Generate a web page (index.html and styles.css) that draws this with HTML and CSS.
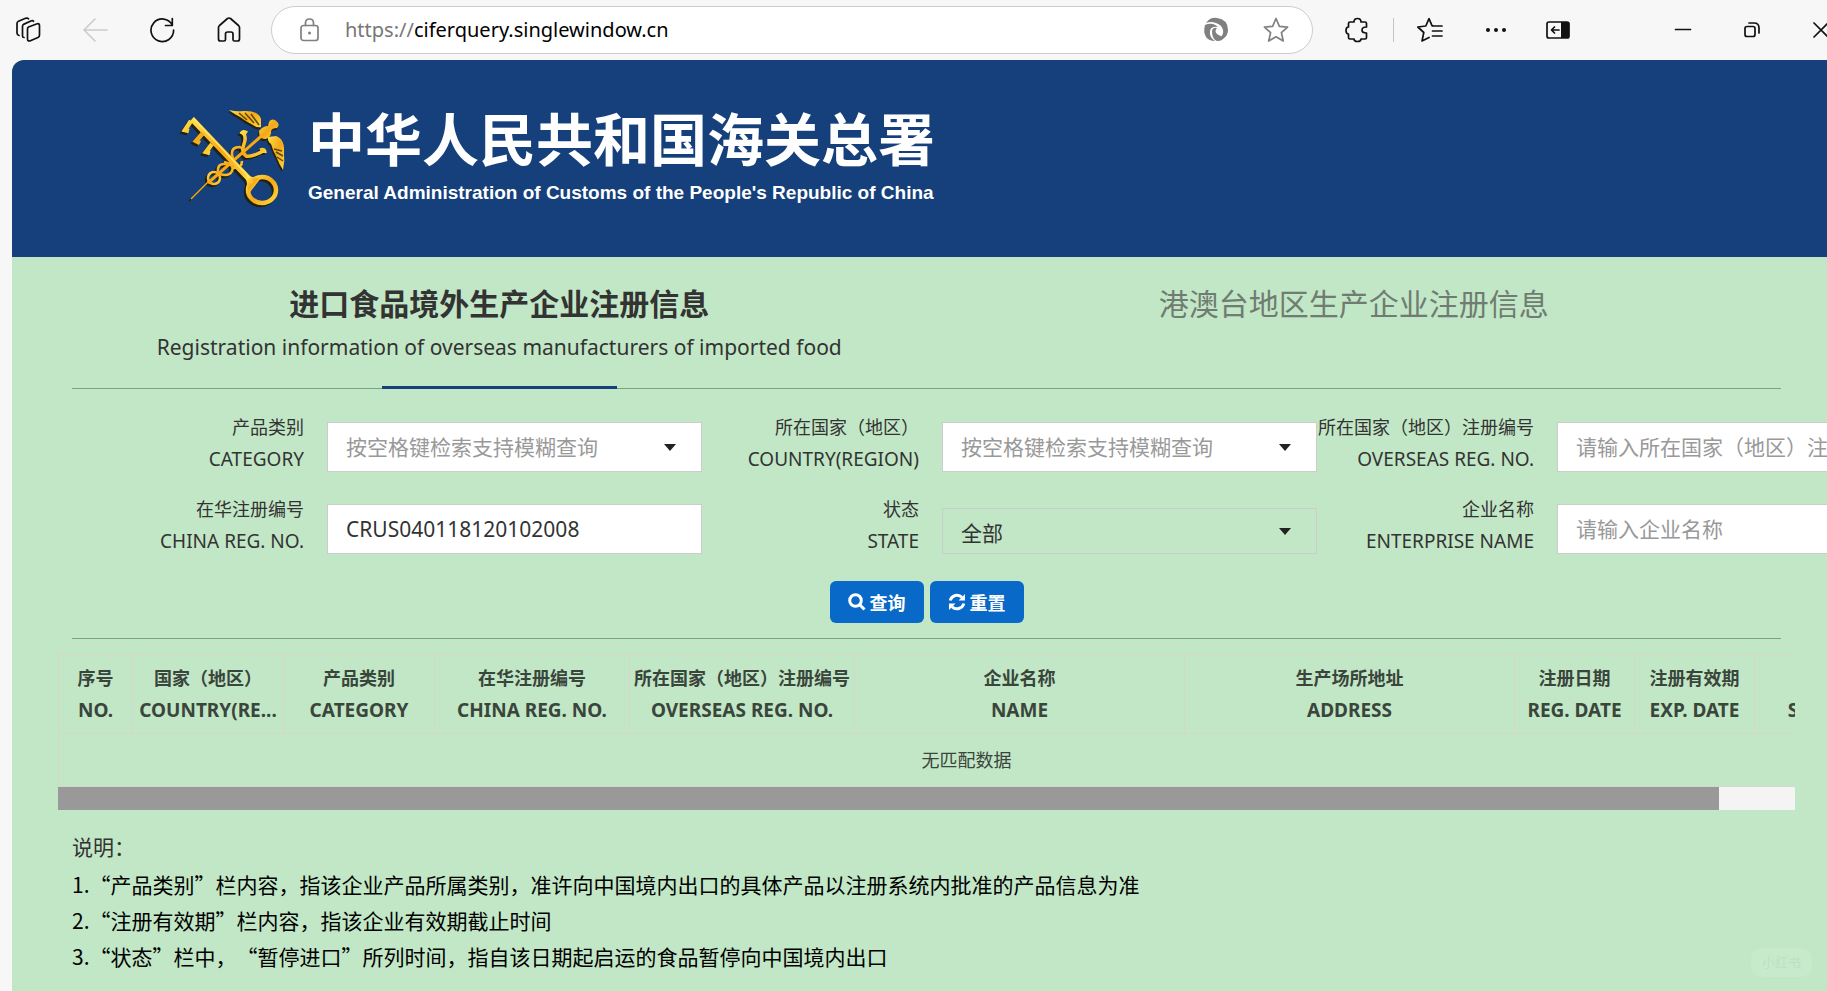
FILE: index.html
```html
<!DOCTYPE html>
<html lang="zh-CN">
<head>
    <meta charset="UTF-8">
    <title>进口食品境外生产企业注册信息</title>
    <link rel="stylesheet" href="styles.css">
</head>
<body>
    <div class="toolbar">
        <div class="nav">
            <button type="button" class="tool" aria-label="Tabs">
                <svg width="26" height="26" viewBox="0 0 26 26"><path d="M13.500 10l8-3q3-1 3 1.500v9.500q0 1.800-1.500 2.500l-7 3q-3.500 1.500-3.500-1.500V12q0-1.500 1-2z"/><path d="M9 20.500q-1.500 0-1.500-1.500V9.500q0-1.700 1.500-2.400l7.500-3.300q1.500-.6 2 .5"/><path d="M4 18.500Q2 18 2 16V6.500q0-1.700 1.500-2.300L10.500 1.300q2-.6 3 .5"/></svg>
            </button>
            <button type="button" class="tool off" aria-label="Back">
                <svg width="26" height="26" viewBox="0 0 26 26"><path d="M25 13H2M13 2L2 13l11 11"/></svg>
            </button>
            <button type="button" class="tool" aria-label="Refresh">
                <svg width="26" height="26" viewBox="0 0 26 26"><path d="M23.300 8A11.300 11.300 0 1 0 24.600 13M23.300 1.500V8.500H16.500"/></svg>
            </button>
            <button type="button" class="tool" aria-label="Home">
                <svg width="26" height="26" viewBox="0 0 26 26"><path d="M2.500 10.500Q2.500 9.500 3.500 8.500l8-7q1.500-1 3 0l8 7q1 1 1 2V22q0 2-2 2h-3q-1.500 0-1.500-1.500V17q0-2-2-2h-3.500q-2 0-2 2v5.500Q9.500 24 8 24H4.500q-2 0-2-2z"/></svg>
            </button>
        </div>
        <div class="address">
            <svg class="grey" width="26" height="26" viewBox="0 0 26 26"><rect x="5" y="8.500" width="17" height="15" rx="2.500"/><path d="M9.500 8.500V6q0-4 4-4t4 4v2.500"/><circle class="fill" cx="13.500" cy="16" r="1.500"/></svg>
            <span class="url"><span class="scheme">https://</span>ciferquery.singlewindow.cn</span>
            <button type="button" class="tool grey" aria-label="Translate page">
                <svg width="26" height="26" viewBox="0 0 26 26"><path class="fill" d="M3 6Q7 0 14 1q11 1.500 11 12 0 5-4 8-2 1-4 0 4-4 3-8-1-5-7-7-5-2-10 0z"/><path class="fill" d="M2 8q4-2 8-1 3 1 5 3-7-1-8 4-1 6 5 10-6 0-9-4Q0 15 2 8z"/><path class="fill" d="M9 14q1-4 5-3-3 3 0 6 4 3 8 2.500-3 5-8 4.500-5-2-5-10z"/></svg>
            </button>
            <button type="button" class="tool grey" aria-label="Favourite">
                <svg width="26" height="26" viewBox="0 0 26 26"><path d="M13 1.500l3.400 7.800 8.200.8-6.200 5.600 1.900 8.300L13 19.800 5.700 24l1.900-8.300L1.400 10.100l8.200-.8z"/></svg>
            </button>
        </div>
        <div class="extras">
            <button type="button" class="tool" aria-label="Extensions">
                <svg width="26" height="26" viewBox="0 0 26 26"><path d="M6 5h4q0-3.500 3.500-3.500T17 5h4q1.500 0 1.500 1.500V10q-4.500 0-4.500 3t4.500 3v4.500q0 1.500-1.500 1.500h-4q0 2.500-3.500 2.500T10 22H6q-1.500 0-1.500-1.500V17Q2 17 2 13.500T4.500 10V6.500Q4.500 5 6 5z"/></svg>
            </button>
            <span class="divider"></span>
            <button type="button" class="tool" aria-label="Favourites list">
                <svg width="26" height="26" viewBox="0 0 26 26"><path d="M17 9l-2-.3-3-7-3.200 7.300-8 1 6 5.500L5 24l7-3.500M15.500 9H25M15.500 14H25M15.500 19H25"/></svg>
            </button>
            <button type="button" class="tool dots" aria-label="More">
                <svg width="26" height="26" viewBox="0 0 26 26"><circle class="fill" cx="5" cy="13" r="2"/><circle class="fill" cx="13" cy="13" r="2"/><circle class="fill" cx="21" cy="13" r="2"/></svg>
            </button>
            <button type="button" class="tool" aria-label="Sidebar">
                <svg width="26" height="26" viewBox="0 0 26 26"><rect x="2" y="5" width="22" height="16" rx="2"/><path class="fill" d="M16 5h6q2 0 2 2v12q0 2-2 2h-6z"/><path d="M14 13H7M9.500 10L6.500 13l3 3"/></svg>
            </button>
        </div>
        <div class="window">
            <button type="button" class="tool" aria-label="Minimise">
                <svg width="26" height="26" viewBox="0 0 26 26"><path d="M5.500 12.500h15"/></svg>
            </button>
            <button type="button" class="tool" aria-label="Restore">
                <svg width="26" height="26" viewBox="0 0 26 26"><rect x="6" y="9.500" width="10" height="10" rx="2"/><path d="M10 6h5q5 0 5 5v5"/></svg>
            </button>
            <button type="button" class="tool" aria-label="Close">
                <svg width="26" height="26" viewBox="0 0 26 26"><path d="M6 6l14 14M20 6L6 20"/></svg>
            </button>
        </div>
    </div>

    <div class="page">
        <header class="banner">
            <svg class="emblem" width="130" height="120" viewBox="0 0 130 120">
                <defs>
                    <linearGradient id="gold" x1="0" y1="0" x2="1" y2="1">
                        <stop offset="0" stop-color="#ffe04a"/>
                        <stop offset=".5" stop-color="#f5a818"/>
                        <stop offset="1" stop-color="#ffd83c"/>
                    </linearGradient>
                    <g id="staff">
                        <path d="M19 100L36 83" stroke-width="1.500"/>
                        <path d="M36 84L94 33" stroke-width="3"/>
                        <circle cx="42" cy="79" r="6" stroke-width="2.500"/>
                        <path d="M46 73q-1-9 8-8 10 1 6-9-1-8 8-8 4 2 3 8M48 75q9 3 12-3t-8-9M61 69q9 0 9-7" stroke-width="2.500"/>
                        <path d="M70 33q5 4 2 12t2 12q4 1 11-2t7-4M69 35q2-4 6-1M88 51q5-2 5 3" stroke-width="3.500"/>
                    </g>
                    <g id="wings">
                        <path d="M57 11q8 2 14 1 15-1 18 8v8q-4 1-8-2-8-4-13-8-6-3-11-7z"/>
                        <path d="M111 71q2-9 1-17 1-14-8-17l-8 1q-1 4 3 7 2 7 5 12 3 8 7 14z"/>
                        <path d="M87 32q4-5 9-5 1-8 7-6 6 4 2 8-5 0-6 3 1 5-5 8-7 1-7-8z"/>
                    </g>
                    <g id="key">
                        <path d="M20 20L80 83" stroke-width="5.500"/>
                        <path d="M19 22l-6 9 4 1M31 34l-7 8 4 2M40 45l-6 8 4 1" stroke-width="4.500"/>
                        <ellipse cx="90" cy="91" rx="14" ry="13" stroke-width="4.500"/>
                        <path d="M76 79l9 2-7 9z" stroke-width="4"/>
                    </g>
                </defs>
                <g fill="none" stroke="#24210f" transform="translate(-2 2)"><use href="#staff"/><use href="#key"/></g>
                <use href="#wings" fill="#24210f" transform="translate(-1 2)"/>
                <g fill="none" stroke="url(#gold)"><use href="#staff"/></g>
                <use href="#wings" fill="url(#gold)"/>
                <path d="M67 14l8 7M73 14l9 10M79 15l8 11M110 52l-8-2M111 57l-7-4M111 62l-6-4" stroke="#5c4a10" stroke-width="1.500"/>
                <g fill="none" stroke="url(#gold)"><use href="#key"/></g>
                <path d="M21 19L78 79" stroke="#ffe56a" stroke-width="1.500"/>
            </svg>
            <div class="brand">
                <h1>中华人民共和国海关总署</h1>
                <p>General Administration of Customs of the People's Republic of China</p>
            </div>
        </header>

        <main>
            <nav class="tabs">
                <a href="#overseas" class="tab active">
                    <b>进口食品境外生产企业注册信息</b>
                    <span>Registration information of overseas manufacturers of imported food</span>
                </a>
                <a href="#region" class="tab">港澳台地区生产企业注册信息</a>
            </nav>

            <form class="search">
                <div class="fields">
                    <div class="field">
                        <label for="category">产品类别<span class="en">CATEGORY</span></label>
                        <div class="pick">
                            <select id="category" class="empty"><option>按空格键检索支持模糊查询</option></select>
                        </div>
                    </div>
                    <div class="field">
                        <label for="country">所在国家（地区）<span class="en">COUNTRY(REGION)</span></label>
                        <div class="pick">
                            <select id="country" class="empty"><option>按空格键检索支持模糊查询</option></select>
                        </div>
                    </div>
                    <div class="field">
                        <label for="overseas-no">所在国家（地区）注册编号<span class="en">OVERSEAS REG. NO.</span></label>
                        <input type="text" id="overseas-no" placeholder="请输入所在国家（地区）注册编号">
                    </div>
                    <div class="field">
                        <label for="china-no">在华注册编号<span class="en">CHINA REG. NO.</span></label>
                        <input type="text" id="china-no" value="CRUS040118120102008">
                    </div>
                    <div class="field">
                        <label for="state">状态<span class="en">STATE</span></label>
                        <div class="pick">
                            <select id="state" class="plain"><option>全部</option></select>
                        </div>
                    </div>
                    <div class="field">
                        <label for="enterprise">企业名称<span class="en">ENTERPRISE NAME</span></label>
                        <input type="text" id="enterprise" placeholder="请输入企业名称">
                    </div>
                </div>
                <div class="actions">
                    <button type="button" class="btn">
                        <svg width="18" height="18" viewBox="0 0 18 18"><circle cx="7.500" cy="7.500" r="5.800"/><path d="M12 12l4.500 4.500"/></svg>查询
                    </button>
                    <button type="reset" class="btn">
                        <svg width="18" height="18" viewBox="0 0 18 18"><path d="M2.200 7.500A7 7 0 0 1 14 4.300M15.800 10.500A7 7 0 0 1 4 13.700"/><path class="fill" d="M17 1v6.500h-6.500zM1 17v-6.500h6.500z"/></svg>重置
                    </button>
                </div>
            </form>

            <div class="results">
                <div class="clip">
                    <table>
                        <colgroup>
                            <col class="c-no"><col class="c-mid"><col class="c-mid"><col class="c-china"><col class="c-over">
                            <col class="c-wide"><col class="c-wide"><col class="c-date"><col class="c-date"><col class="c-date">
                        </colgroup>
                        <thead>
                            <tr>
                                <th>序号<span class="en">NO.</span></th>
                                <th>国家（地区）<span class="en">COUNTRY(RE...</span></th>
                                <th>产品类别<span class="en">CATEGORY</span></th>
                                <th>在华注册编号<span class="en">CHINA REG. NO.</span></th>
                                <th>所在国家（地区）注册编号<span class="en">OVERSEAS REG. NO.</span></th>
                                <th>企业名称<span class="en">NAME</span></th>
                                <th>生产场所地址<span class="en">ADDRESS</span></th>
                                <th>注册日期<span class="en">REG. DATE</span></th>
                                <th>注册有效期<span class="en">EXP. DATE</span></th>
                                <th>状态<span class="en">STATE</span></th>
                            </tr>
                        </thead>
                        <tbody>
                            <tr><td colspan="10">无匹配数据</td></tr>
                        </tbody>
                    </table>
                </div>
                <div class="track"><div class="thumb"></div></div>
            </div>

            <section class="notes">
                <p class="lead">说明：</p>
                <p>1.“产品类别”栏内容，指该企业产品所属类别，准许向中国境内出口的具体产品以注册系统内批准的产品信息为准</p>
                <p>2.“注册有效期”栏内容，指该企业有效期截止时间</p>
                <p>3.“状态”栏中，“暂停进口”所列时间，指自该日期起启运的食品暂停向中国境内出口</p>
            </section>
        </main>
    </div>
    <span class="mark">小红书</span>
</body>
</html>
```

FILE: styles.css
```css
* {
    box-sizing: border-box;
}
body {
    margin: 0;
    font-family: "Noto Sans", "Noto Sans CJK SC", sans-serif;
    font-size: 18px;
    line-height: 32px;
    color: #333;
    background-color: #f7f7f7;
    overflow: hidden;
}
h1, p {
    margin: 0;
}
a {
    color: inherit;
    text-decoration: none;
}
button, input, select {
    font-family: inherit;
    margin: 0;
}
svg {
    display: block;
    flex: none;
}
.en {
    display: block;
    font-size: 19px;
}

/* browser bar */
.toolbar {
    display: flex;
    align-items: center;
    height: 60px;
    padding-left: 15px;
    margin-right: -7px;
}
.tool {
    display: block;
    padding: 0;
    border: 0;
    background: none;
    color: #111;
}
.tool svg, .address svg {
    fill: none;
    stroke: currentColor;
    stroke-width: 1.7;
    stroke-linecap: round;
    stroke-linejoin: round;
}
.tool .fill, .address .fill {
    fill: currentColor;
    stroke: none;
}
.off {
    color: #ccc;
}
.grey {
    color: #808080;
}
.nav {
    display: flex;
    gap: 41px;
}
.address {
    display: flex;
    align-items: center;
    flex: 1;
    height: 48px;
    margin-left: 29px;
    padding: 0 23px 0 24px;
    border: 1px solid #ccc;
    border-radius: 24px;
    background-color: #fff;
}
.address .tool {
    margin-left: 34px;
}
.url {
    flex: 1;
    margin-left: 23px;
    font-size: 20px;
    color: #000;
}
.scheme {
    color: #777;
}
.extras {
    display: flex;
    align-items: center;
    gap: 23px;
    margin-left: 31px;
}
.divider {
    width: 1px;
    height: 24px;
    background-color: #c4c4c4;
}
.dots {
    margin: 0 13px 0 17px;
}
.window {
    display: flex;
    gap: 43px;
    margin-left: 99px;
}

/* header */
.page {
    min-height: 931px;
    margin-left: 12px;
    border-top-left-radius: 12px;
    background-color: #c2e7c6;
    overflow: hidden;
}
.banner {
    display: flex;
    align-items: center;
    height: 197px;
    padding-left: 160px;
    color: #fff;
    background-color: #15407b;
}
.brand {
    margin-left: 6px;
    padding-top: 3px;
    white-space: nowrap;
}
.brand h1 {
    font-size: 57px;
    line-height: 66px;
    font-weight: bold;
}
.brand p {
    font: bold 19px/42px "Liberation Sans", Arial, sans-serif;
}
main {
    padding: 0 46px 0 60px;
}

/* tabs */
.tabs {
    display: flex;
    height: 132px;
    padding-top: 27px;
    border-bottom: 1px solid #7aa382;
}
.tab {
    flex: 1;
    text-align: center;
    font-size: 30px;
    line-height: 40px;
    color: #707c72;
}
.active {
    display: flex;
    flex-direction: column;
    align-items: center;
    gap: 5px;
    color: #333;
}
.active span {
    font-size: 21px;
    line-height: 36px;
}
.active::after {
    content: "";
    flex: none;
    width: 235px;
    height: 3px;
    margin-top: 16px;
    background-color: #15407b;
}

/* search form */
.search {
    padding-bottom: 15px;
    border-bottom: 1px solid #7aa382;
}
.fields {
    display: grid;
    grid-template-columns: repeat(3, 1fr);
    row-gap: 21px;
    margin: 22px -151px 0 15px;
}
.field {
    display: grid;
    grid-template-columns: 217px 1fr;
    grid-template-rows: 61px;
    column-gap: 23px;
    align-items: end;
}
.field label {
    align-self: start;
    text-align: right;
    white-space: nowrap;
}
.field input, .field select {
    display: block;
    width: 100%;
    height: 50px;
    padding: 0 18px;
    border: 1px solid #ccc;
    border-radius: 0;
    font-size: 21px;
    color: #333;
    background-color: #fff;
    appearance: none;
}
.field input::placeholder, .field .empty {
    color: #999;
}
.pick {
    position: relative;
}
.pick::after {
    content: "";
    position: absolute;
    right: 26px;
    top: 50%;
    margin-top: -3px;
    border: 6px solid transparent;
    border-top: 7px solid #222;
    border-bottom: 0;
}
.field .plain {
    height: 46px;
    padding-top: 4px;
    background-color: transparent;
}
.actions {
    display: flex;
    justify-content: center;
    gap: 6px;
    margin-top: 27px;
}
.btn {
    display: flex;
    align-items: center;
    gap: 4px;
    height: 42px;
    padding: 0 18px;
    border: 0;
    border-radius: 6px;
    font-size: 18px;
    font-weight: bold;
    color: #fff;
    background-color: #0869c8;
}
.btn svg {
    fill: none;
    stroke: #fff;
    stroke-width: 3;
}
.btn .fill {
    fill: #fff;
    stroke: none;
}

/* results */
.results {
    margin: 15px -14px 0;
}
.clip {
    overflow: hidden;
}
table {
    width: 1817px;
    table-layout: fixed;
    border-collapse: collapse;
}
th, td {
    padding: 7px 0;
    border: 1px solid #d6d6cb;
    text-align: center;
    white-space: nowrap;
    color: #3a453c;
}
td {
    padding: 10px 0;
}
.c-no {
    width: 74px;
}
.c-mid {
    width: 151px;
}
.c-china {
    width: 195px;
}
.c-over {
    width: 225px;
}
.c-wide {
    width: 330px;
}
.c-date {
    width: 120px;
}
.track {
    height: 23px;
    background-color: #f4f4f4;
}
.thumb {
    width: 95.6%;
    height: 100%;
    background-color: #999;
}

/* notes */
.notes {
    margin-top: 18px;
    font-family: "Noto Sans CJK SC", sans-serif;
    font-size: 21px;
    line-height: 36px;
    color: #000;
    text-spacing-trim: space-all;
}
.notes .lead {
    margin-bottom: 2px;
    color: #333;
}
.mark {
    position: fixed;
    right: 15px;
    bottom: 14px;
    padding: 0 11px;
    border-radius: 12px;
    font-size: 13px;
    line-height: 29px;
    color: #bce0c1;
    background-color: #c8eacc;
}
```
